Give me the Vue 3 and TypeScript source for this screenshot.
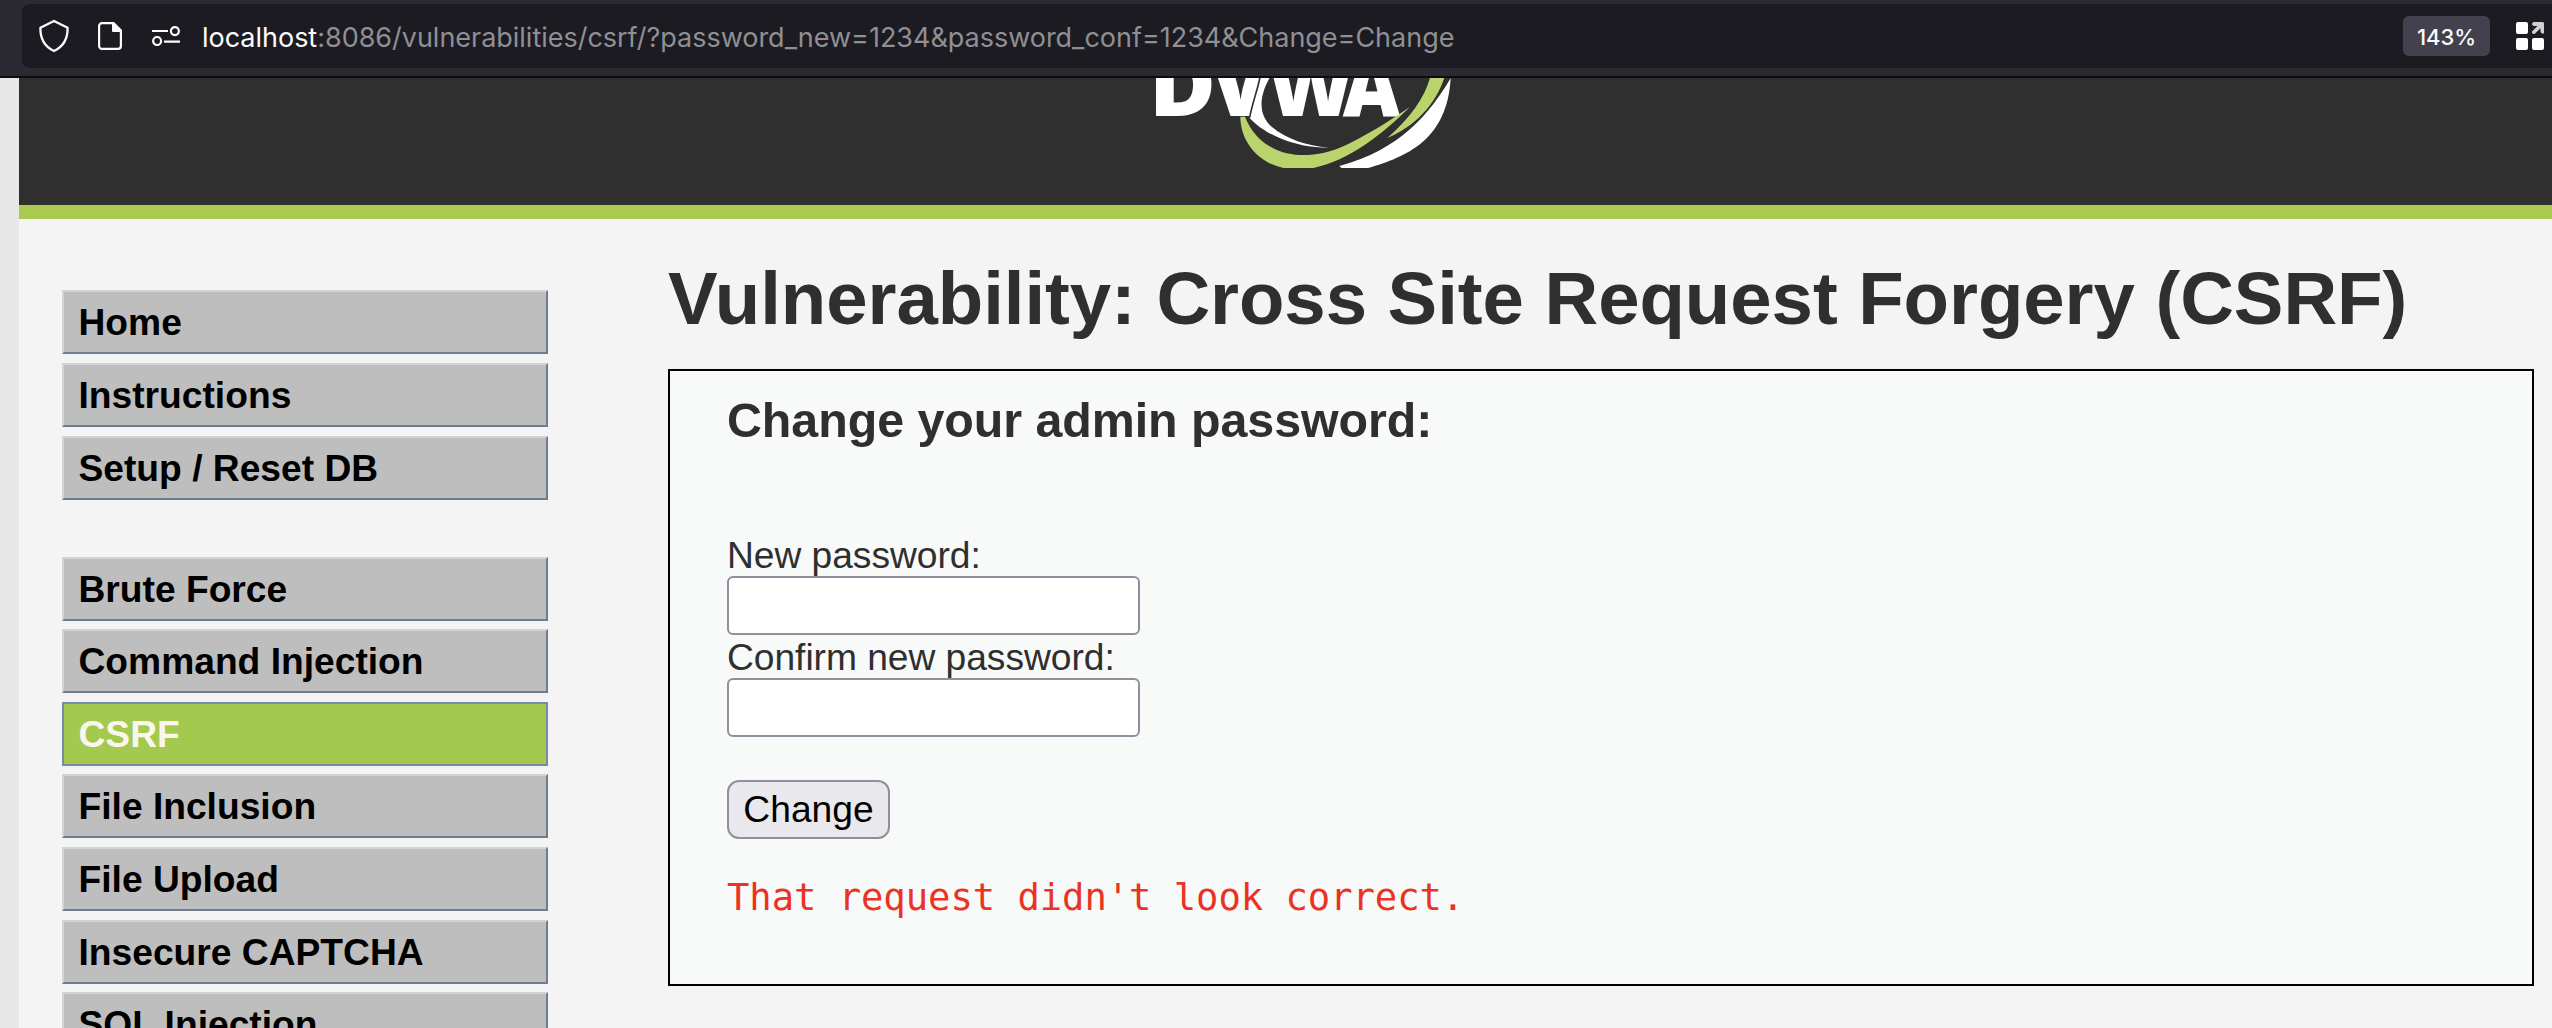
<script setup lang="ts">
interface MenuItem {
  label: string
  active?: boolean
}

const menuGroups: MenuItem[][] = [
  [{ label: 'Home' }, { label: 'Instructions' }, { label: 'Setup / Reset DB' }],
  [
    { label: 'Brute Force' },
    { label: 'Command Injection' },
    { label: 'CSRF', active: true },
    { label: 'File Inclusion' },
    { label: 'File Upload' },
    { label: 'Insecure CAPTCHA' },
    { label: 'SQL Injection' },
  ],
]
</script>

<template>
  <div class="window">
    <div class="toolbar">
      <div class="urlbar">
        <svg class="ic-shield" width="32" height="34" viewBox="0 0 32 34">
          <path d="M16 2 L29.6 8.8 C29.8 18.5 26 27.4 16 32 C6 27.4 2.2 18.5 2.4 8.8 Z" fill="none" stroke="#fbfbfe" stroke-width="2.3" stroke-linejoin="round" />
        </svg>
        <svg class="ic-page" width="26" height="30" viewBox="0 0 26 30">
          <path d="M16 2.1 H5 A2.9 2.9 0 0 0 2.1 5 V25 A2.9 2.9 0 0 0 5 27.9 H21 A2.9 2.9 0 0 0 23.9 25 V10" fill="none" stroke="#fbfbfe" stroke-width="2.2" />
          <path d="M15 1 H17 L25 9 V11 H16 A1 1 0 0 1 15 10 Z" fill="#fbfbfe" />
        </svg>
        <svg class="ic-perm" width="28" height="20" viewBox="0 0 28 20" fill="none" stroke="#fbfbfe" stroke-width="2.2">
          <path d="M0 5 H16 M12 15.6 H28" />
          <circle cx="22.9" cy="5.1" r="4" />
          <circle cx="5.1" cy="15" r="4" />
        </svg>
        <div class="url"><span class="host">localhost</span><span class="path">:8086/vulnerabilities/csrf/?password_new=1234&amp;password_conf=1234&amp;Change=Change</span></div>
        <div class="zoom">143%</div>
        <svg class="ic-apps" width="28" height="28" viewBox="0 0 28 28">
          <g fill="#fff">
            <rect width="12" height="12" rx="2" />
            <rect y="16" width="12" height="12" rx="2" />
            <rect x="16" y="16" width="12" height="12" rx="2" />
          </g>
          <path d="M17.5 0 H26.5 A1.5 1.5 0 0 1 28 1.5 V11 L26.5 12 L24.5 10 V6.2 L18.6 12 H17.2 L16 10.8 V9.4 L21.5 4 H17.5 L16 2.5 V1.5 Z" fill="#cfcfd2" />
        </svg>
      </div>
    </div>

    <div class="page">
      <div class="header">
        <svg class="logo" width="310" height="90" viewBox="150 54 930 270">
          <g class="logo-text" fill="#fff">
            <text x="147" y="169" textLength="201" lengthAdjust="spacingAndGlyphs">D</text>
            <text x="331" y="169" textLength="182" lengthAdjust="spacingAndGlyphs">V</text>
            <text x="500" y="169" textLength="264" lengthAdjust="spacingAndGlyphs">W</text>
            <text x="728" y="169" textLength="172" lengthAdjust="spacingAndGlyphs">A</text>
          </g>
          <path d="M485 50 C480 80 460 130 449 174 C495 225 590 265 686 263 C620 256 560 238 515 200 C475 165 475 110 512 48 Z" fill="#fff" />
          <path d="M480 50 C476 80 458 125 449 172" fill="none" stroke="#2f2f2f" stroke-width="5" />
          <path d="M421 170 C421 235 465 305 550 324 H640 C750 300 850 220 930 140 C860 190 790 230 740 254 C690 278 640 287 600 285 C520 283 460 235 435 170 Z" fill="#bbd36c" />
          <path d="M991 50 C975 110 935 170 862 234 C945 200 1010 130 1034 50 Z" fill="#bbd36c" />
          <path d="M1052 54 C990 160 900 270 718 318 L724 324 H805 C920 290 1042 240 1052 54 Z" fill="#fff" />
        </svg>
      </div>

      <div class="body">
        <nav class="menu">
          <ul v-for="(group, i) in menuGroups" :key="i">
            <li v-for="item in group" :key="item.label" :class="{ selected: item.active }">{{ item.label }}</li>
          </ul>
        </nav>

        <main class="content">
          <h1>Vulnerability: Cross Site Request Forgery (CSRF)</h1>
          <section class="box">
            <h2>Change your admin password:</h2>
            <form @submit.prevent>
              <label for="pw-new">New password:</label>
              <input id="pw-new" type="password" />
              <label for="pw-conf" class="second">Confirm new password:</label>
              <input id="pw-conf" type="password" />
              <button type="submit">Change</button>
            </form>
            <pre>That request didn't look correct.</pre>
          </section>
        </main>
      </div>
    </div>
  </div>
</template>

<style>
body {
  margin: 0;
  overflow: hidden;
}
</style>

<style scoped>
.window {
  width: 2552px;
  height: 1028px;
  overflow: hidden;
  display: flex;
  flex-direction: column;
  font-family: "Liberation Sans", Arial, sans-serif;
  color: #2f2f2f;
}

.toolbar {
  box-sizing: border-box;
  flex: none;
  height: 78px;
  padding: 4px 0 0 22px;
  background: #2b2a33;
  border-bottom: 2px solid #0c0c0d;
}

.urlbar {
  box-sizing: border-box;
  height: 64px;
  padding: 0 8px 0 16px;
  display: flex;
  align-items: center;
  background: #1c1b22;
  border-radius: 8px 0 0 8px;
}

.ic-page {
  margin-left: 27px;
}

.ic-perm {
  margin-left: 29px;
}

.url {
  margin-left: 22px;
  padding-top: 3px;
  flex: 1;
  font: 27px/40px Inter, "Noto Sans", sans-serif;
  letter-spacing: -0.02px;
  white-space: nowrap;
}

.host {
  color: #fbfbfe;
}

.path {
  color: #8f8f94;
}

.zoom {
  width: 87px;
  height: 40px;
  margin-right: 26px;
  border-radius: 6px;
  background: #42414d;
  color: #fbfbfe;
  font: 500 22px/42px Inter, "Noto Sans", sans-serif;
  text-align: center;
}

.page {
  flex: 1;
  min-height: 0;
  border-left: 19px solid #e7e7e7;
  background: #f4f4f4;
}

.header {
  box-sizing: border-box;
  height: 141px;
  padding-left: 1131px;
  background: #2f2f2f;
  border-bottom: 14px solid #a9c951;
}

.logo {
  display: block;
  filter: blur(0.6px);
}

.logo-text {
  font: 800 255px "Open Sans", sans-serif;
}

.body {
  display: flex;
}

.menu {
  width: 486px;
  padding: 71.4px 0 0 43px;
}

ul {
  list-style: none;
  margin: 0 0 57px;
  padding: 0;
}

li {
  box-sizing: border-box;
  height: 64px;
  margin-bottom: 8.6px;
  padding: 9px 0 0 14.5px;
  border: 2px solid;
  border-color: #d3d3d3 #6f7b8f #6f7b8f #d3d3d3;
  background: #bebebe;
  color: #000;
  font-size: 37.2px;
  font-weight: bold;
  line-height: 42px;
  white-space: nowrap;
}

li.selected {
  background: #a3c94f;
  border-color: #778ba9;
  color: #f9f7ed;
}

.content {
  width: 1866px;
  margin-left: 120px;
  padding-top: 38px;
}

h1 {
  margin: 0 0 28px;
  font-size: 74.4px;
  line-height: 84px;
  letter-spacing: -0.05px;
  white-space: nowrap;
}

.box {
  box-sizing: border-box;
  height: 617px;
  padding: 22px 57px 0;
  border: 2px solid #000;
  background: #f8faf9;
}

h2 {
  margin: 0 0 87px;
  font-size: 48.36px;
  line-height: 54px;
  letter-spacing: -0.05px;
}

form {
  display: flex;
  flex-direction: column;
  align-items: flex-start;
}

label {
  font-size: 37.2px;
  line-height: 42px;
  letter-spacing: -0.04px;
}

.second {
  margin-top: 1px;
}

input {
  box-sizing: border-box;
  width: 413px;
  height: 59px;
  margin: 0;
  padding: 0 6px;
  border: 2px solid #8f8f9d;
  border-radius: 6px;
  background: #fff;
  outline: none;
}

button {
  box-sizing: border-box;
  width: 163px;
  height: 59px;
  margin: 43px 0 0;
  padding: 0 0 2px;
  border: 2px solid #8f8f9d;
  border-radius: 12px;
  background: #e9e9ed;
  color: #000;
  font: 37.2px/42px "Liberation Sans", Arial, sans-serif;
}

pre {
  margin: 36px 0 0;
  color: #ea3323;
  font: 37.2px/44px "DejaVu Sans Mono", monospace;
  letter-spacing: -0.05px;
}
</style>
